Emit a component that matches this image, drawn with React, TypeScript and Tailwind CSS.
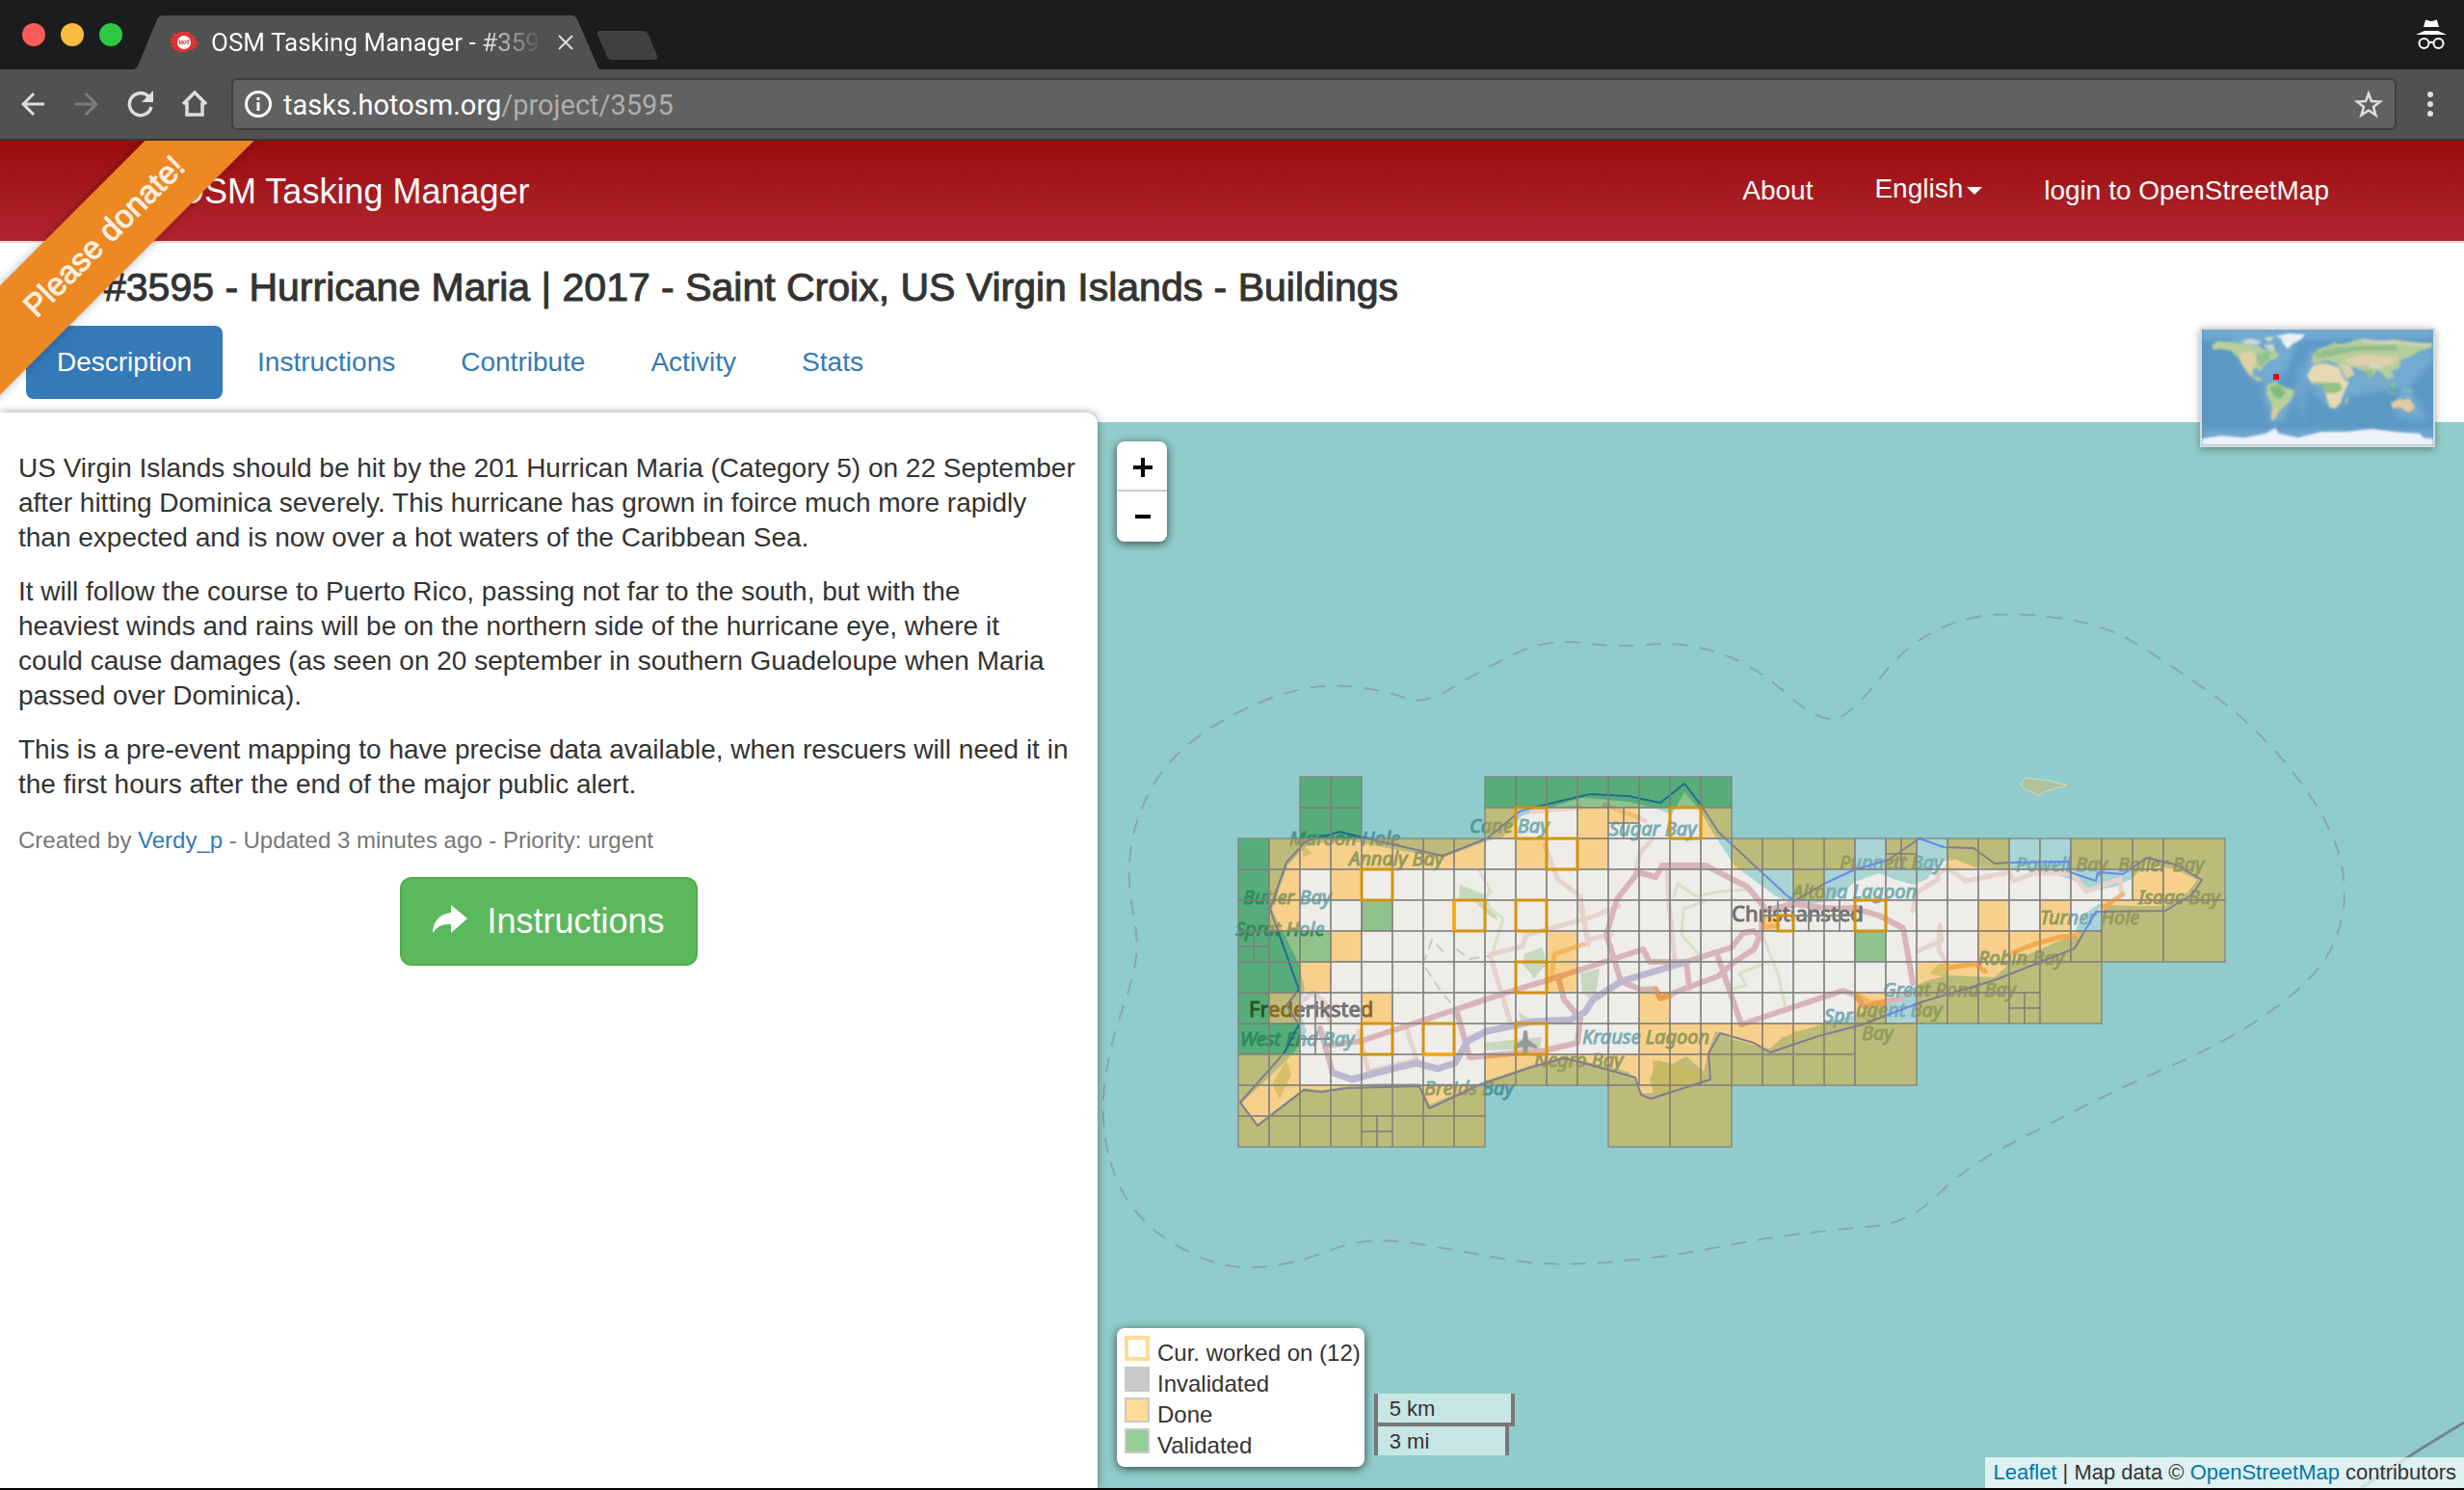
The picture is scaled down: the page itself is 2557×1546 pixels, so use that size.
import React from "react";
import { MdArrowBack, MdArrowForward } from "react-icons/md";

type Pt = [number, number];

const CELL = 32;
const GRID_X = 1285;
const GRID_Y = 806;

// One letter per cell: V validated, D done, R ready, W currently worked on,
// lower case = the cell is split in four, "." = no cell here.
const ROWS = [
  "..VV....VVVVVVVV................",
  "..VV....DWRDxRWD................",
  "VDDDDDDDRDWDRRRRDDDDRdRDDRRDDD..",
  "VDRDWRRRRRRRRRRRRRDRRRRRRRRRRD..",
  "VDRRVRRWRWRRRRRRRyrrWRRRDRDR....",
  "vVVDRRRRRRDRRRRRRRRRVRRRDDDD....",
  "VVDRRRRRRWDRRRRRRRRRRRDDDD......",
  "VDrRDRRRRRRRRDRRRRRRDRDDDd......",
  "VVrRWRWRRWRRRDDDDDDD............",
  "DDRRRRRRDDDDDDDDDDDD............",
  "DDDDDDDD........................",
  "DDDDdDDD........................",
];

// Double-size cells, as column and row of the top left corner.
const BIG: Pt[] = [[30, 2], [28, 4], [30, 4], [26, 6], [20, 8], [12, 10], [14, 10]];

const FILL: Record<string, string> = {
  V: "rgba(0,128,0,0.4)",
  D: "rgba(255,165,0,0.4)",
  R: "rgba(228,232,236,0.3)",
};

type Cell = { x: number; y: number; s: number; t: string; w?: boolean };

function buildCells(): Cell[] {
  const out: Cell[] = [];
  ROWS.forEach((row, r) => {
    row.split("").forEach((ch, c) => {
      const x = GRID_X + c * CELL;
      const y = GRID_Y + r * CELL;
      const quad = (t: string, w = false) => {
        for (let i = 0; i < 4; i++) {
          out.push({ x: x + (i % 2) * 16, y: y + (i > 1 ? 16 : 0), s: 16, t: t[i], w: w && i === 3 });
        }
      };
      if (ch === ".") return;
      if (ch === "x") quad("DDRR");
      else if (ch === "y") quad("RRDR", true);
      else if (ch === "v") quad("VVVV");
      else if (ch === "d") quad("DDDD");
      else if (ch === "r") quad("RRRR");
      else if (ch === "W") out.push({ x, y, s: CELL, t: "R", w: true });
      else out.push({ x, y, s: CELL, t: ch });
    });
  });
  BIG.forEach(([c, r]) => out.push({ x: GRID_X + c * CELL, y: GRID_Y + r * CELL, s: 64, t: "D" }));
  return out;
}

const CELLS = buildCells();

const AREA =
  "1287,1144 1305,1168 1353,1131 1372,1133 1397,1129 1473,1127 1483,1150 1537,1125 1590,1107 1623,1098 1640,1102 1697,1118 1703,1136 1713,1140 1775,1120 1773,1093 1785,1072 1820,1082 1837,1092 1887,1075 1933,1063 1993,1040 2070,1017 2153,984 2175,946 2247,945 2275,928 2285,913 2257,897 2228,890 2203,907 2177,905 2175,914 2148,905 2147,894 2085,895 2070,896 2048,880 2017,879 1992,870 1960,892 1923,903 1893,917 1862,935 1853,928 1783,863 1765,835 1748,813 1723,833 1690,826 1650,824 1603,835 1577,842 1543,870 1497,888 1440,875 1390,863 1355,873 1335,895 1318,943 1348,1027 1335,1043 1348,1063 1333,1092";

const LAND =
  "1289,1144 1305,1166 1353,1129 1372,1131 1397,1127 1430,1124 1473,1124 1484,1146 1537,1123 1590,1105 1623,1097 1640,1100 1690,1112 1700,1125 1704,1134 1716,1134 1712,1120 1720,1100 1735,1104 1750,1096 1768,1112 1772,1093 1780,1070 1797,1078 1820,1084 1837,1088 1850,1076 1887,1064 1933,1050 1950,1045 1975,1030 1998,1018 2020,1012 2070,1014 2085,1000 2110,988 2140,975 2153,968 2160,950 2178,938 2210,940 2247,940 2270,926 2280,913 2257,902 2228,897 2212,912 2195,920 2172,924 2148,912 2120,904 2085,902 2050,900 2030,892 2012,894 2000,912 1985,918 1965,912 1950,906 1925,915 1900,935 1862,940 1840,928 1800,898 1780,868 1762,838 1748,822 1735,845 1715,838 1690,832 1660,829 1640,828 1603,840 1580,846 1560,868 1543,873 1497,890 1440,880 1400,872 1358,876 1337,897 1320,943 1333,970 1348,1000 1354,1027 1347,1045 1356,1070 1343,1092 1320,1115";

const TERRITORY: Pt[] = [
  [700, 712], [706, 665], [722, 620], [724, 595], [717, 560], [722, 520], [745, 480], [790, 450], [840, 434], [885, 440],
  [905, 449], [945, 425], [985, 406], [1030, 412], [1070, 408], [1115, 422], [1160, 462], [1182, 450], [1212, 411],
  [1250, 392], [1290, 390], [1340, 398], [1375, 419], [1430, 457], [1475, 510], [1494, 556], [1488, 600], [1463, 631],
  [1416, 663], [1347, 693], [1300, 717], [1250, 743], [1215, 778], [1170, 782], [1120, 788], [1060, 800], [985, 806],
  [930, 796], [870, 786], [825, 804], [780, 808], [735, 786], [710, 755],
];

// Closed curve that runs through the middles of the polygon's sides.
function smooth(points: Pt[], k: number): string {
  const p = points.map(([x, y]) => [x * k, y * k] as Pt);
  const mid = (a: Pt, b: Pt) => `${(a[0] + b[0]) / 2} ${(a[1] + b[1]) / 2}`;
  let d = `M${mid(p[p.length - 1], p[0])}`;
  p.forEach((q, i) => {
    d += ` Q${q[0]} ${q[1]} ${mid(q, p[(i + 1) % p.length])}`;
  });
  return d;
}

const MAJOR = [
  "1413,1080 1563,1030 1603,1018 1650,1003 1705,985 1712,998 1750,998 1797,983 1809,968 1820,966 1826,972 1820,985 1800,998 1783,1013 1750,1025 1723,1036 1718,1026 1703,1027 1682,1018 1667,970 1678,933 1700,905 1718,910 1725,898 1770,898 1813,920 1830,940 1828,966",
  "1783,993 1807,1063 1912,1028 1925,1032 1935,1045 1975,1035",
  "1750,998 1753,1025",
  "1895,942 1930,944 1950,950 1975,963 1979,985 1985,1020",
  "1370,1067 1375,1085 1383,1113",
  "1512,1050 1525,1097 1603,1090 1637,1082 1640,1057 1623,1037 1617,1013",
  "1830,945 1862,938 1900,943 1927,942",
  "1375,1085 1413,1080",
];

const MINOR = [
  "1547,993 1567,1060",
  "1547,990 1580,982 1584,970 1650,952 1680,940",
  "1603,877 1617,913 1640,930 1648,980",
  "1697,905 1702,885 1715,870",
  "1730,898 1732,940 1738,995",
  "1640,940 1648,975 1672,970",
  "1460,1068 1470,1100 1420,1112 1410,1070",
  "2010,908 2020,900 2040,914 2085,905 2090,914 2110,906 2150,906 2165,925 2200,912 2202,928 2180,944",
  "2012,912 1990,925 1985,945",
  "1990,987 2015,976 2013,960 2012,985 2022,1004 2050,1000 2060,1008",
  "2085,990 2110,980 2140,972 2155,970",
  "1350,1040 1362,1030 1375,1040 1380,1060",
  "1590,842 1640,838",
  "1665,835 1700,848 1707,852",
];

const ACCENTS = [
  "1610,1015 1613,990 1643,980",
  "1718,1026 1723,1036 1733,1034",
  "2022,1004 2050,1000 2060,1008",
  "2090,988 2110,980 2138,972 2153,972",
  "2185,940 2203,928",
  "1928,1032 1940,1040 1955,1040",
  "1830,962 1845,960",
];

const PATHS = [
  "1535,903 1547,925 1537,935 1560,953 1550,985",
  "1737,930 1741,917 1760,930 1785,925 1817,923",
  "1770,935 1747,943 1745,970 1763,990",
  "1830,973 1845,1010 1853,1045",
  "1835,998 1805,1010 1812,1022 1797,1027",
];

const TRUNK =
  "1383,1113 1403,1120 1440,1110 1470,1103 1492,1109 1510,1103 1523,1080 1543,1070 1590,1060 1630,1058 1645,1050 1653,1037 1683,1018 1750,998";

const WOODS = [
  "1515,918 1540,928 1555,955 1545,950 1530,935 1514,932",
  "1582,990 1600,983 1605,1000 1592,1015 1580,1000",
  "1575,1050 1592,1060 1580,1062",
  "1640,1010 1660,1005 1655,1040 1642,1030",
  "1335,1100 1340,1115 1328,1140 1320,1125",
  "1540,1082 1600,1076 1598,1088 1542,1090",
  "1352,877 1362,885 1352,890",
  "1850,1080 1862,1070 1875,1068 1862,1078",
  "1715,1100 1768,1112 1770,1120 1715,1136",
  "2002,1010 2012,1000 2022,1000 2022,1015",
];

const LABELS: [number, number, string, boolean?][] = [
  [1338, 877, "Maroon Hole"],
  [1400, 898, "Annaly Bay"],
  [1290, 938, "Butler Bay"],
  [1282, 971, "Sprat Hole"],
  [1287, 1085, "West End Bay"],
  [1525, 864, "Cane Bay"],
  [1478, 1136, "Breids Bay"],
  [1592, 1107, "Negro Bay"],
  [1670, 867, "Sugar Bay"],
  [1909, 902, "Punnett Bay"],
  [1860, 932, "Altona Lagoon"],
  [1642, 1083, "Krause Lagoon"],
  [1954, 1034, "Great Pond Bay"],
  [1893, 1061, "Spr"],
  [1926, 1055, "ugent Bay"],
  [1932, 1079, "Bay"],
  [2092, 904, "Powell Bay"],
  [2198, 904, "Boiler Bay"],
  [2219, 938, "Isaac Bay"],
  [2117, 959, "Turner Hole"],
  [2053, 1001, "Robin Bay"],
  [1296, 1055, "Frederiksted", true],
  [1797, 956, "Christiansted", true],
];

function ProjectMap() {
  return (
    <svg viewBox="1139 438 1418 1106" preserveAspectRatio="xMinYMin slice" className="absolute inset-0 h-full w-full">
      <path
        d={smooth(TERRITORY, 1.631)}
        fill="none"
        stroke="#8a9faa"
        strokeOpacity="0.85"
        strokeWidth="2"
        strokeDasharray="16 12"
      />
      <path d="M2450 1544 Q2500 1510 2557 1476" fill="none" stroke="#75838f" strokeWidth="3" />
      <path
        d="M2097 814 L2102 807 L2110 808 L2128 810 L2145 815 L2130 819 L2120 822 L2116 826 L2108 821 L2102 820 Z"
        fill="#b0c29c"
        stroke="#cfe0c4"
        strokeWidth="1"
      />
      <polygon points={LAND} fill="#f2efe9" />
      {WOODS.map((p) => (
        <polygon key={p} points={p} fill="#a9c79a" fillOpacity="0.75" />
      ))}
      <g fill="none" strokeLinejoin="round" strokeLinecap="round">
        {PATHS.map((p) => (
          <polyline key={p} points={p} stroke="#d3dfb4" strokeWidth="3" />
        ))}
        {MINOR.map((p) => (
          <polyline key={p} points={p} stroke="#e8cbbd" strokeWidth="5" />
        ))}
        {MAJOR.map((p) => (
          <polyline key={p} points={p} stroke="#d59ea2" strokeWidth="6" />
        ))}
        <polyline points={TRUNK} stroke="#ada3c4" strokeWidth="7" />
        <polyline points="1477,1000 1486,975 1500,990" stroke="#bbb" strokeWidth="2" strokeDasharray="9 8" />
        <polyline points="1512,985 1525,995 1545,992" stroke="#bbb" strokeWidth="2" strokeDasharray="9 8" />
        <polyline points="1480,1005 1495,1028 1505,1040 1510,1060" stroke="#bbb" strokeWidth="2" strokeDasharray="9 8" />
      </g>
      <path
        d="M1581 1070 q2 -2 4 0 l1 9 l9 6 v3 l-9 -2 l-1 6 l3 3 h-10 l3 -3 l-1 -6 l-9 2 v-3 l9 -6 z"
        fill="#777"
      />
      <g fontFamily="'Noto Sans', sans-serif" strokeWidth="1">
        {LABELS.map(([x, y, label, town]) => (
          <text
            key={label + x}
            x={x}
            y={y}
            fontSize={town ? 22 : 20}
            fontStyle={town ? "normal" : "italic"}
            fill={town ? "#3c3c3c" : "#4c959b"}
            stroke={town ? "#3c3c3c" : "#4c959b"}
          >
            {label}
          </text>
        ))}
      </g>
      <polygon points={AREA} fill="none" stroke="#335ff0" strokeWidth="2" strokeLinejoin="round" />
      {CELLS.map((c) => (
        <rect
          key={`${c.x}-${c.y}-${c.s}`}
          x={c.x}
          y={c.y}
          width={c.s}
          height={c.s}
          fill={FILL[c.t]}
          stroke="#808080"
          strokeOpacity="0.85"
          strokeWidth="1.5"
        />
      ))}
      <g fill="none" stroke="#f29a2e" strokeOpacity="0.5" strokeWidth="5" strokeLinecap="round" strokeLinejoin="round">
        {ACCENTS.map((p) => (
          <polyline key={p} points={p} />
        ))}
      </g>
      {CELLS.filter((c) => c.w).map((c) => (
        <rect key={`w${c.x}-${c.y}`} x={c.x} y={c.y} width={c.s} height={c.s} fill="none" stroke="#d1930f" strokeWidth="3" />
      ))}
      <path d="M1509 934 V966 M1477 1094 H1509" stroke="#ffa500" strokeWidth="3" />
    </svg>
  );
}

function WorldMap() {
  return (
    <svg viewBox="0 0 240 120" className="block w-full">
      <defs>
        <filter id="soft" x="-5%" y="-5%" width="110%" height="110%">
          <feGaussianBlur stdDeviation="1" />
        </filter>
        <filter id="haze" x="-20%" y="-20%" width="140%" height="140%">
          <feGaussianBlur stdDeviation="3" />
        </filter>
        <clipPath id="frame">
          <rect width="240" height="120" />
        </clipPath>
      </defs>
      <rect width="240" height="120" fill="#5b98c4" />
      <g clipPath="url(#frame)">
        <g filter="url(#haze)" fill="#7db2d6" fillOpacity="0.7">
          <rect y="-4" width="240" height="14" />
          <path d="M30 10 L100 10 L90 40 L70 60 L50 50 L35 25 Z" />
          <path d="M112 20 H240 V32 L215 60 L235 95 L200 90 L205 60 L150 70 L140 85 L120 70 L104 45 Z" />
          <path d="M60 60 L100 62 L85 95 L72 97 Z" />
          <path d="M0 104 H240 V112 H0 Z" />
          <path d="M100 30 L110 60 L104 100 L98 60 Z" fillOpacity="0.5" />
        </g>
        <g filter="url(#soft)">
          <path d="M10 17 L16 12 L30 13 L45 15 L58 17 L66 22 L72 20 L80 25 L78 30 L70 32 L64 38 L60 44 L58 40 L52 42 L53 48 L60 50 L62 54 L56 52 L48 46 L42 37 L38 29 L30 22 L20 20 L12 21 Z" fill="#b9cf9c" />
          <path d="M39 25 L52 22 L58 30 L52 42 L53 47 L46 42 L40 33 Z" fill="#e0d0a8" />
          <path d="M56 26 L72 22 L70 31 L62 38 L57 34 Z" fill="#8fc28e" />
          <path d="M40 12 L50 9 L62 12 L58 16 L46 15 Z M64 8 L76 7 L70 13 Z M64 16 L74 15 L76 22 L68 20 Z" fill="#c9d8d3" />
          <path d="M76 7 L90 4 L107 5 L103 10 L94 15 L89 20 L84 14 L82 9 Z" fill="#edf2f6" />
          <path d="M68 57 L76 54 L86 60 L96 63 L94 70 L88 78 L82 83 L76 93 L72 95 L73 80 L67 66 Z" fill="#b7cf98" />
          <path d="M70 60 L80 57 L87 65 L82 72 L74 69 Z" fill="#84bb82" />
          <path d="M73 80 L80 82 L75 92 L72 94 Z" fill="#dccba0" />
          <path d="M115 37 L128 35 L142 39 L148 52 L153 54 L147 66 L144 76 L138 82 L132 80 L128 66 L124 57 L114 56 L109 48 Z" fill="#e6d9b4" />
          <path d="M112 54 L130 55 L143 55 L146 62 L138 66 L128 66 L124 57 Z" fill="#95c083" />
          <path d="M150 71 L152 69 L151 77 L149 76 Z" fill="#b7cf98" />
          <path d="M114 34 L116 24 L122 20 L132 16 L150 14 L162 10 L180 12 L200 10 L220 13 L240 14 L238 19 L226 22 L216 28 L206 32 L205 40 L196 43 L200 49 L192 52 L188 46 L182 42 L174 51 L168 43 L160 40 L150 38 L156 43 L158 47 L150 52 L143 39 L138 34 L128 32 L124 34 L118 36 Z" fill="#b5cf9c" />
          <path d="M152 30 L166 26 L190 28 L205 28 L198 36 L182 40 L172 36 L160 38 L148 33 Z M143 36 L154 38 L158 46 L150 50 Z" fill="#e0cfac" />
          <path d="M172 36 L186 36 L188 40 L176 40 Z" fill="#d8d5cc" />
          <path d="M168 42 L178 42 L174 52 Z M116 24 L140 18 L200 16 L205 22 L160 22 L130 28 L120 30 Z" fill="#92bf8a" />
          <path d="M164 9 L182 11 L214 13 L238 15 L236 18 L200 15 L170 14 Z" fill="#cfd2b8" />
          <path d="M130 18 L138 12 L142 18 L134 22 Z M122 22 L125 20 L124 28 L121 26 Z" fill="#a9c9a0" />
          <path d="M186 54 L194 62 L190 60 Z M196 55 L202 56 L198 62 Z M208 60 L220 64 L218 66 L210 63 Z M190 64 L202 66 L196 67 Z" fill="#8fc28e" />
          <path d="M196 76 L204 72 L212 73 L214 70 L220 78 L221 82 L214 86 L206 81 L198 82 Z" fill="#e0cc9e" />
          <path d="M0 113 L20 110 L44 112 L66 108 L76 102 L80 108 L100 112 L124 106 L150 106 L176 103 L200 106 L226 108 L230 112 L240 113 V120 H0 Z" fill="#eef3fb" />
        </g>
        <rect x="74" y="46" width="6" height="6" fill="#f00012" />
      </g>
    </svg>
  );
}

function BrowserChrome() {
  return (
    <div className="font-[Roboto,sans-serif] text-white">
      <div className="flex h-[72px] items-end bg-[#1b1c1e] pr-[18px]">
        <div className="flex gap-4 self-center pl-[23px]">
          <button aria-label="Close" className="size-6 rounded-full bg-[#fc5b57]" />
          <button aria-label="Minimize" className="size-6 rounded-full bg-[#fdbc40]" />
          <button aria-label="Zoom" className="size-6 rounded-full bg-[#2fc845]" />
        </div>
        <div className="relative ml-3 h-14 w-[484px]">
          <svg viewBox="0 0 484 56" preserveAspectRatio="none" className="absolute inset-0 h-full w-full">
            <path d="M0 56 Q4 54 6 48 L24 4 Q26 0 30 0 H454 Q458 0 460 4 L480 50 Q481 55 484 56 Z" fill="#515151" />
          </svg>
          <div className="relative flex h-full items-center pl-9">
            <svg viewBox="0 0 32 22" className="h-[22px] w-8">
              <path d="M1 6 H5 L3 2 H10 L9 0 H23 L22 3 H26 L25 5 H29 L27 8 L32 12 L28 14 L29 17 H25 L26 19 H20 L19 21 H9 L10 19 H4 L6 16 H3 L4 13 L0 10 L3 9 Z" fill="#dd3236" />
              <circle cx="16" cy="11" r="7" fill="#fff" />
              <path d="M11.500 8.500 v5 M11.500 11 h2.500 M14 8.500 v5 M18.500 9 h3 M20 9 v4.500" stroke="#dd3236" strokeWidth="1" fill="none" />
              <circle cx="16.500" cy="11" r="1.500" stroke="#dd3236" strokeWidth="1" fill="none" />
            </svg>
            <span className="ml-3 w-[344px] overflow-hidden bg-linear-to-r from-white from-80% to-transparent bg-clip-text text-[26px] whitespace-nowrap text-transparent">
              OSM Tasking Manager - #3595
            </span>
            <button aria-label="Close tab" className="ml-4">
              <svg viewBox="0 0 16 16" className="size-4">
                <path d="M1 1 L15 15 M15 1 L1 15" stroke="#ddd" strokeWidth="2" />
              </svg>
            </button>
          </div>
        </div>
        <button aria-label="New tab" className="mb-[10px] -ml-1 h-[30px] w-[64px]">
          <svg viewBox="0 0 64 30" className="h-full w-full">
            <path d="M4 0 H48 Q52 0 54 4 L63 26 Q64 30 60 30 H16 Q12 30 11 27 L1 4 Q0 0 4 0 Z" fill="#404040" />
          </svg>
        </button>
        <svg viewBox="0 0 32 32" className="mb-[20px] ml-auto size-8">
          <path d="M10 1 Q11 0 12 1 Q16 3 20 1 Q21 0 22 1 L24 8 H8 Z" fill="#fff" />
          <path d="M9 12 H23 L32 16 H0 Z" fill="#fff" />
          <g fill="none" stroke="#fff" strokeWidth="2">
            <circle cx="8.500" cy="25" r="5" />
            <circle cx="23.500" cy="25" r="5" />
            <path d="M13.500 24.500 Q16 23 18.500 24.500" />
          </g>
        </svg>
      </div>
      <div className="flex h-[74px] items-center border-b-2 border-[#353535] bg-[#515151] pr-7 pl-4">
        <button aria-label="Back">
          <MdArrowBack className="size-9 text-[#dedede]" />
        </button>
        <button aria-label="Forward" className="ml-5">
          <MdArrowForward className="size-9 text-[#7c7c7c]" />
        </button>
        <button aria-label="Reload" className="ml-6">
          <svg viewBox="0 0 28 28" className="size-7">
            <path d="M22 6 A11.500 11.500 0 1 0 25 17" fill="none" stroke="#dedede" strokeWidth="3.500" />
            <path d="M27 0 V12 H15 Z" fill="#dedede" />
          </svg>
        </button>
        <button aria-label="Home" className="ml-7">
          <svg viewBox="0 0 28 28" className="size-7">
            <path d="M2 14 L14 2 L26 14 M6 12 V25 H22 V12" fill="none" stroke="#dedede" strokeWidth="3.500" />
          </svg>
        </button>
        <div className="ml-6 flex h-[54px] flex-1 items-center rounded-md border-2 border-[#3f3f3f] bg-[#616161] pr-3 pl-3">
          <svg viewBox="0 0 28 28" className="size-7">
            <circle cx="14" cy="14" r="12.500" fill="none" stroke="#fff" strokeWidth="3" />
            <path d="M14 12 V21 M14 7 V10" stroke="#fff" strokeWidth="3" />
          </svg>
          <div className="ml-3 flex-1 pt-[2px] text-[29px]">
            tasks.hotosm.org<span className="text-[#aeaeae]">/project/3595</span>
          </div>
          <button aria-label="Bookmark this page">
            <svg viewBox="0 0 30 30" className="size-[30px]">
              <path d="M15 4 L18 12 L27 12.500 L20 18 L22.500 26.500 L15 21.500 L7.500 26.500 L10 18 L3 12.500 L12 12 Z" fill="none" stroke="#dedede" strokeWidth="2.500" />
            </svg>
          </button>
        </div>
        <button aria-label="Menu" className="ml-8 flex flex-col gap-1 pr-1">
          <span className="size-[6px] rounded-full bg-[#dedede]" />
          <span className="size-[6px] rounded-full bg-[#dedede]" />
          <span className="size-[6px] rounded-full bg-[#dedede]" />
        </button>
      </div>
    </div>
  );
}

const TABS = ["Description", "Instructions", "Contribute", "Activity", "Stats"];

const LEGEND = [
  { label: "Cur. worked on (12)", swatch: "border-4 border-[#fedb97] bg-white" },
  { label: "Invalidated", swatch: "bg-[#c9c9c9]" },
  { label: "Done", swatch: "border-2 border-[#c9c9c9] bg-[#fedb97]" },
  { label: "Validated", swatch: "border-2 border-[#c9c9c9] bg-[#97ce97]" },
];

export default function App() {
  return (
    <div className="flex min-h-screen flex-col border-b-2 border-black bg-white font-['Liberation_Sans',Arial,sans-serif] text-[28px] leading-9 text-[#333]">
      <BrowserChrome />
      <div className="relative flex flex-1 flex-col">
        <header className="flex h-[106px] items-center border-b-2 border-[#f5dcd8] bg-linear-to-b from-[#990c0c] to-[#b2242f] pr-[140px] pl-[184px] text-white">
          <a href="#" className="pt-[2px] text-[36px]">OSM Tasking Manager</a>
          <nav className="ml-auto flex items-center gap-16">
            <a href="#">About</a>
            <button className="flex items-center gap-1 pb-1">
              English
              <span className="mt-1 border-x-8 border-t-8 border-x-transparent border-t-white" />
            </button>
            <a href="#">login to OpenStreetMap</a>
          </nav>
        </header>

        <div className="absolute top-0 left-0 z-20 size-[290px] overflow-hidden [clip-path:polygon(0_0,100%_0,0_100%)]">
          <a
            href="#"
            className="absolute top-[59px] left-[-142px] flex h-20 w-[500px] -rotate-45 items-center justify-center bg-[#ee8822] text-[33px] text-[#fdf0e2] shadow-[0_0_8px_rgba(0,0,0,0.3)] [-webkit-text-stroke:1px_#fdf0e2]"
          >
            Please donate!
          </a>
        </div>

        <h1 className="mt-[22px] pl-[108px] text-[41px] leading-[48px] [-webkit-text-stroke:1px_#333]">
          #3595 - Hurricane Maria | 2017 - Saint Croix, US Virgin Islands - Buildings
        </h1>

        <ul className="mt-4 mb-[14px] flex gap-1 pl-[27px]">
          {TABS.map((tab, i) => (
            <li key={tab}>
              <a
                href="#"
                className={
                  i === 0
                    ? "block rounded-lg bg-[#337ab7] px-8 py-5 text-white"
                    : "block rounded-lg px-8 py-5 text-[#337ab7]"
                }
              >
                {tab}
              </a>
            </li>
          ))}
        </ul>

        <main className="flex flex-1">
          <section className="z-10 flex w-[1139px] flex-col items-start rounded-tr-xl bg-white px-[19px] pt-10 shadow-[0_0_10px_rgba(0,0,0,0.4)]">
            <p className="mb-5">
              US Virgin Islands should be hit by the 201 Hurrican Maria (Category 5) on 22 September
              <br />
              after hitting Dominica severely. This hurricane has grown in foirce much more rapidly
              <br />
              than expected and is now over a hot waters of the Caribbean Sea.
            </p>
            <p className="mb-5">
              It will follow the course to Puerto Rico, passing not far to the south, but with the
              <br />
              heaviest winds and rains will be on the northern side of the hurricane eye, where it
              <br />
              could cause damages (as seen on 20 september in southern Guadeloupe when Maria
              <br />
              passed over Dominica).
            </p>
            <p className="mb-[22px]">
              This is a pre-event mapping to have precise data available, when rescuers will need it in
              <br />
              the first hours after the end of the major public alert.
            </p>
            <p className="text-[24px] text-[#777]">
              Created by <a href="#" className="text-[#337ab7]">Verdy_p</a> - Updated 3 minutes ago - Priority: urgent
            </p>
            <a
              href="#"
              className="mt-5 flex h-[92px] items-center gap-5 self-center rounded-xl border-2 border-[#4cae4c] bg-[#5cb85c] px-8 text-[36px] text-white"
            >
              <svg viewBox="0 0 36 34" className="h-[34px] w-9">
                <path d="M19 0 L36 14 L19 29 V20 Q6 19 0 29 Q1 10 19 8 Z" fill="#fff" />
              </svg>
              Instructions
            </a>
          </section>

          <section className="relative mt-[10px] flex-1 bg-[#90cccb]">
            <ProjectMap />
            <div className="absolute top-5 left-5 flex w-[52px] flex-col overflow-hidden rounded-lg bg-white shadow-[0_2px_10px_rgba(0,0,0,0.65)]">
              <button aria-label="Zoom in" className="flex h-[52px] items-center justify-center border-b-2 border-[#ccc] pt-1 pl-[2px]">
                <svg viewBox="0 0 20 20" className="size-5">
                  <path d="M10 0 V20 M0 10 H20" stroke="#000" strokeWidth="4" />
                </svg>
              </button>
              <button aria-label="Zoom out" className="flex h-[52px] items-center justify-center pl-[2px]">
                <svg viewBox="0 0 16 4" className="h-1 w-4">
                  <path d="M0 2 H16" stroke="#000" strokeWidth="4" />
                </svg>
              </button>
            </div>

            <div className="absolute top-[-98px] right-[30px] w-[244px] border-2 border-[#d6dbdb] shadow-[0_2px_8px_rgba(0,0,0,0.35)]">
              <WorldMap />
            </div>

            <div className="absolute bottom-[22px] left-5 flex items-end gap-[10px] text-[24px] leading-8">
              <ul className="rounded-lg bg-white py-2 pr-1 pl-2 shadow-[0_2px_10px_rgba(0,0,0,0.65)]">
                {LEGEND.map((item) => (
                  <li key={item.label} className="flex h-8 gap-2">
                    <span className={`size-[26px] ${item.swatch}`} />
                    <span className="pt-[2px]">{item.label}</span>
                  </li>
                ))}
              </ul>
              <div className="mb-3 text-[22px] leading-8">
                <div className="h-[34px] w-[146px] border-x-4 border-b-4 border-[#777] bg-white/50 pl-3">5 km</div>
                <div className="h-[30px] w-[140px] border-x-4 border-[#777] bg-white/50 pl-3">3 mi</div>
              </div>
            </div>

            <div className="absolute right-0 bottom-0 bg-white/70 px-2 text-[22px] leading-8">
              <a href="#" className="text-[#0078a8]">Leaflet</a> | Map data ©{" "}
              <a href="#" className="text-[#0078a8]">OpenStreetMap</a> contributors
            </div>
          </section>
        </main>
      </div>
    </div>
  );
}
